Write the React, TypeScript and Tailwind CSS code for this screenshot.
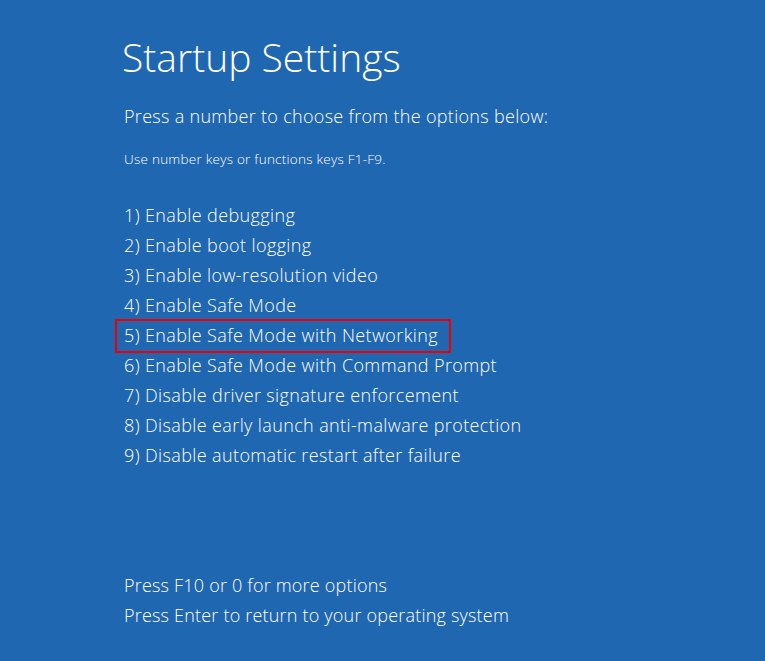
const options = [
    "1) Enable debugging",
    "2) Enable boot logging",
    "3) Enable low-resolution video",
    "4) Enable Safe Mode",
    "5) Enable Safe Mode with Networking",
    "6) Enable Safe Mode with Command Prompt",
    "7) Disable driver signature enforcement",
    "8) Disable early launch anti-malware protection",
    "9) Disable automatic restart after failure",
];

export default function App() {
    return (
        <div
            className="w-[765px] h-[661px] bg-[#2067b2] text-white overflow-hidden font-[350]"
            style={{ fontFamily: '"Open Sans", "Noto Sans", sans-serif' }}
        >
            <div className="pl-[124px] pt-[34px]">
                <h1 className="text-[39px] leading-[46px] -ml-[2px] font-light">Startup Settings</h1>

                <p className="mt-[21px] text-[18px] leading-[30px] tracking-[0.3px]">
                    Press a number to choose from the options below:
                </p>
                <p className="mt-[18px] text-[13.5px] leading-[20px] tracking-[0.25px]">
                    Use number keys or functions keys F1-F9.
                </p>

                <div className="mt-[31px] flex flex-col text-[18px] leading-[30px] tracking-[0.38px]">
                    {options.map((opt, i) => (
                        <div key={i} className="h-[30px]">
                            {i === 4 ? (
                                <span className="relative inline-block">
                                    {opt}
                                    <span className="absolute -left-[9px] -right-[13px] -top-[1px] -bottom-[3px] border-[2.5px] border-[#ee0000]" />
                                </span>
                            ) : (
                                opt
                            )}
                        </div>
                    ))}
                </div>

                <div className="mt-[100px] flex flex-col text-[18px] leading-[30px] tracking-[0.2px]">
                    <div>Press F10 or 0 for more options</div>
                    <div>Press Enter to return to your operating system</div>
                </div>
            </div>
        </div>
    );
}
